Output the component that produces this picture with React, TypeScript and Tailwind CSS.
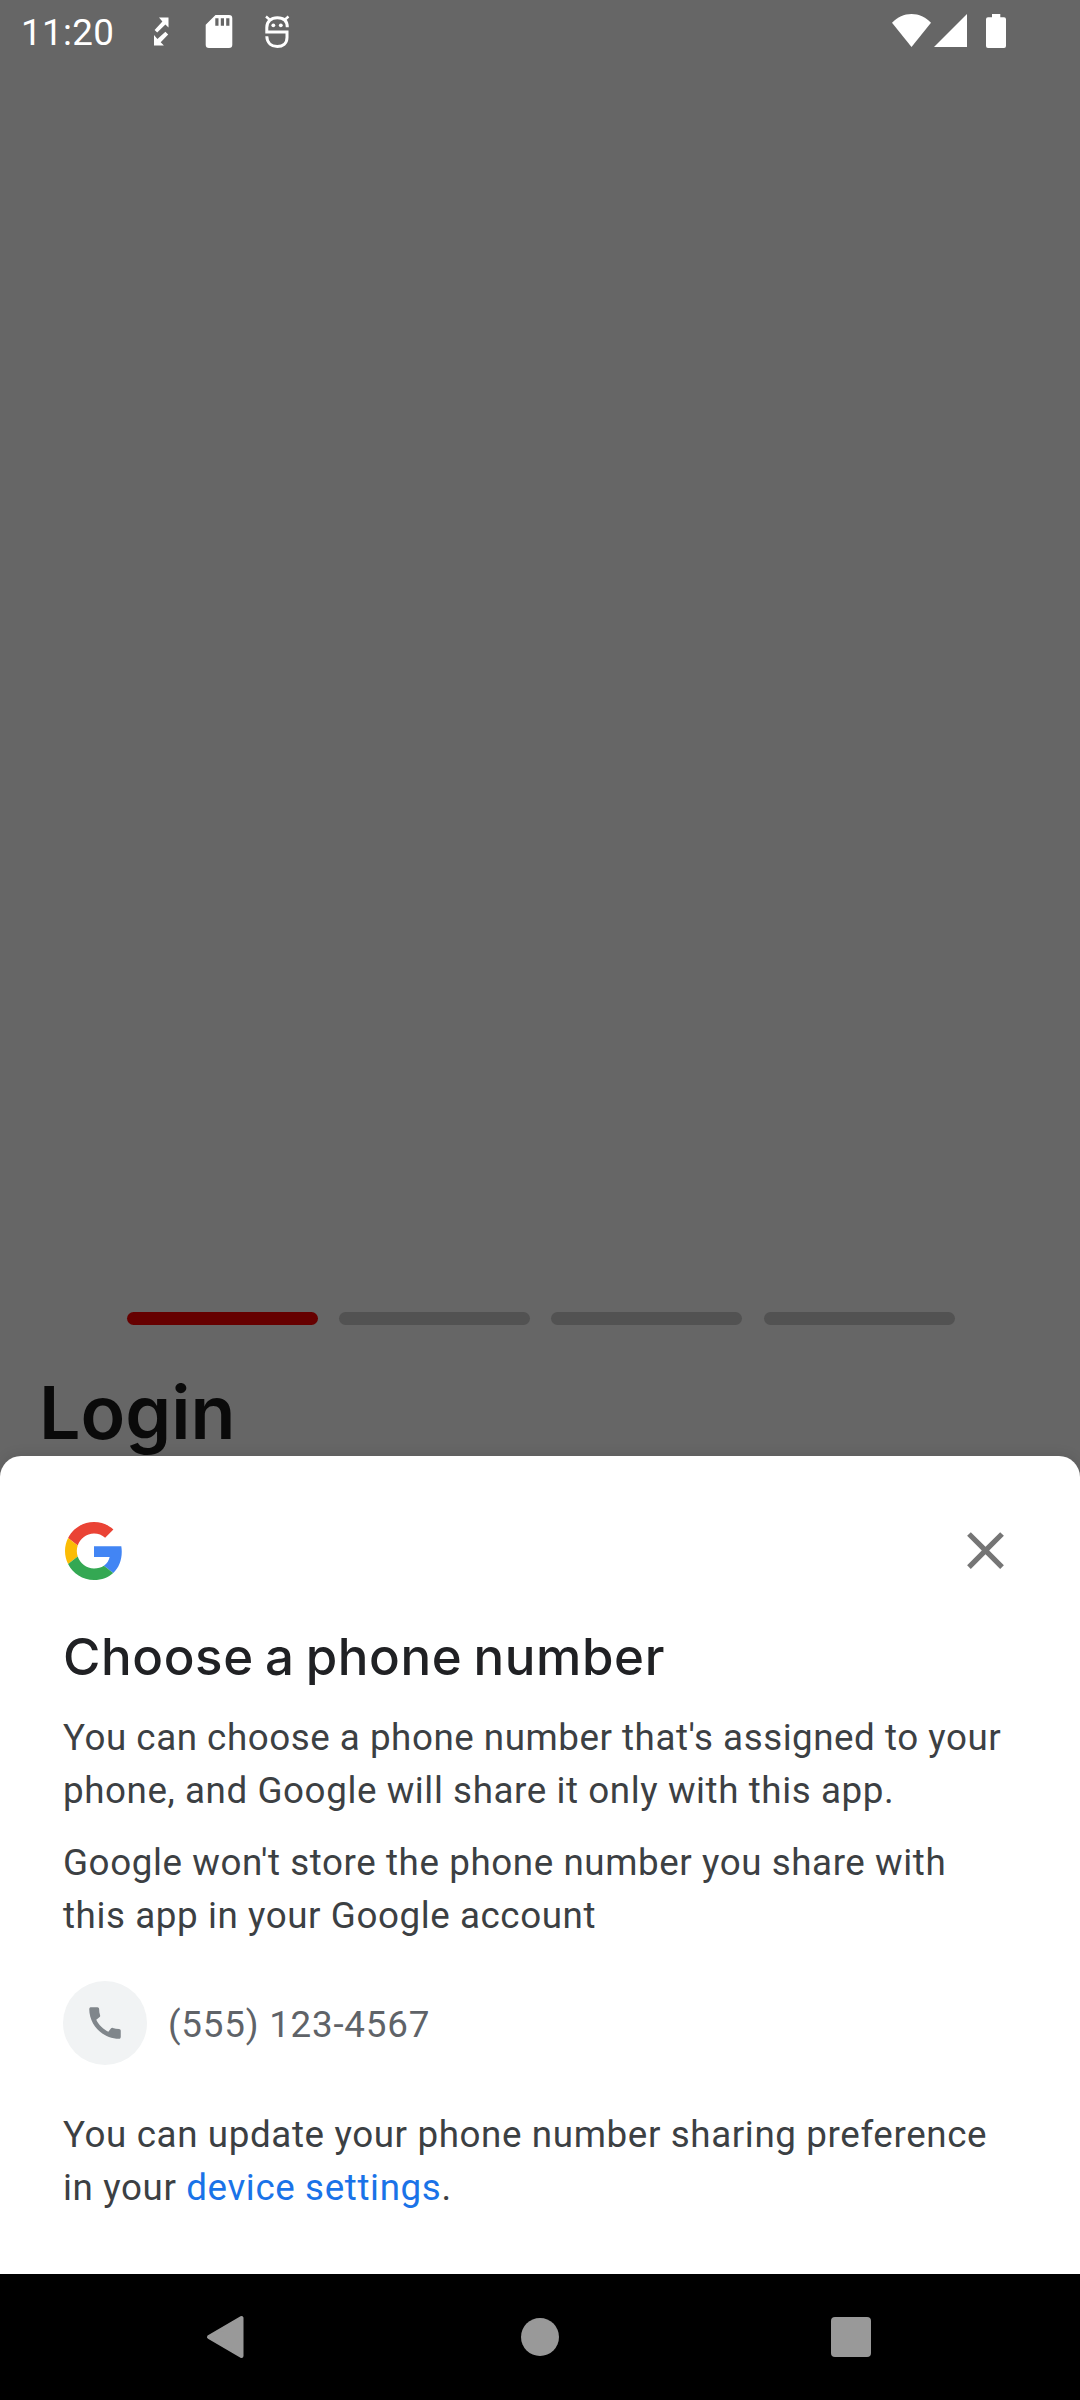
import React from "react";

function StatusBar() {
  return (
    <header className="flex h-[63px] shrink-0 items-start text-white">
      <span className="ml-[21px] mt-[11px] w-[133px] whitespace-nowrap text-[36.75px] leading-[43px] tracking-[0.35px]">11:20</span>
      <svg className="mt-[17px] h-[29px] w-[15px]" viewBox="0 0 15 29" fill="currentColor">
        <path d="M5 0.500H14.500V10.500l-3.100-3.100L3.200 15.600.6 13 8.400 4.500z" />
        <path d="M0 18v10.500h9.900L6.700 25.200 14.200 17.600 11.400 14.800 3.400 22z" />
      </svg>
      <svg className="ml-[36px] mt-[15px] h-[33px] w-[28px]" viewBox="0 0 28 33" fill="currentColor">
        <path fillRule="evenodd" d="M10.500 0H24a3.300 3.300 0 0 1 3.300 3.300V29.700A3.300 3.300 0 0 1 24 33H4A3.300 3.300 0 0 1 .7 29.700V9.800zM10.300 3.200v7.500h3.200V3.200zM15.800 3.200v7.500H19V3.200zM21.200 3.200v7.500h3.200V3.200z" />
      </svg>
      <svg className="ml-[32px] mt-[15px] h-[34px] w-[25px]" viewBox="0 0 25 34" fill="none" stroke="currentColor">
        <path strokeWidth="3" d="M22.300 12.300C22.300 5.900 18.600 2.700 12.300 2.700S1.800 6.600 1.800 12.500V17H22v5.500c0 6-4.300 9-9.700 9S2 28.400 1.800 21.300" />
        <path strokeWidth="2.400" d="M1 1.500 5 5M23.500 1.500 19.500 5" />
        <circle cx="8.300" cy="10.300" r="1.900" fill="currentColor" stroke="none" />
        <circle cx="15.800" cy="10.300" r="1.900" fill="currentColor" stroke="none" />
      </svg>
      <div className="ml-auto mr-[74px] mt-[14px] flex items-start">
        <svg className="h-[33px] w-[39px]" viewBox="0 0 39 33" fill="currentColor">
          <path d="M0 8.800C5.500 3 12 0 19.500 0S33.500 3 39 8.800L19.500 33z" />
        </svg>
        <svg className="ml-[3px] h-[33px] w-[33px]" viewBox="0 0 33 33" fill="currentColor">
          <path d="M33 0v33H0z" />
        </svg>
        <svg className="ml-[19px] h-[34px] w-[20px]" viewBox="0 0 20 34" fill="currentColor">
          <path d="M6 0h8.300v3.300h3.700a2 2 0 0 1 2 2V32a2 2 0 0 1-2 2H2a2 2 0 0 1-2-2V5.300a2 2 0 0 1 2-2h4z" />
        </svg>
      </div>
    </header>
  );
}

function GoogleLogo() {
  return (
    <svg className="h-[58px] w-[58px]" viewBox="0 0 48 48">
      <path fill="#EA4335" d="M24 9.500c3.540 0 6.710 1.220 9.210 3.600l6.850-6.850C35.900 2.380 30.470 0 24 0 14.620 0 6.510 5.380 2.560 13.220l7.980 6.190C12.430 13.720 17.740 9.500 24 9.500z" />
      <path fill="#4285F4" d="M46.980 24.550c0-1.570-.15-3.090-.38-4.550H24v9.020h12.940c-.58 2.960-2.260 5.480-4.780 7.180l7.730 6c4.510-4.180 7.090-10.360 7.090-17.650z" />
      <path fill="#FBBC05" d="M10.530 28.590c-.48-1.450-.76-2.990-.76-4.590s.27-3.140.76-4.590l-7.980-6.190C.92 16.460 0 20.120 0 24c0 3.880.92 7.540 2.560 10.780l7.970-6.190z" />
      <path fill="#34A853" d="M24 48c6.480 0 11.930-2.130 15.890-5.810l-7.730-6c-2.150 1.450-4.920 2.300-8.160 2.300-6.260 0-11.570-4.220-13.470-9.910l-7.980 6.190C6.510 42.620 14.620 48 24 48z" />
    </svg>
  );
}

function PhoneSheet() {
  return (
    <section className="flex h-[818px] shrink-0 flex-col rounded-t-[21px] bg-white px-[63px] text-[36.75px] leading-[53px] tracking-[0.58px] text-[#3c4043] shadow-[0_0_14px_rgba(0,0,0,0.12)]">
      <div className="mt-[63px] flex h-[63px] items-center justify-between">
        <div className="pl-[2px]">
          <GoogleLogo />
        </div>
        <button aria-label="Close">
          <svg className="h-[63px] w-[63px]" viewBox="0 0 24 24" fill="#757575">
            <path d="M19 6.410 17.590 5 12 10.590 6.410 5 5 6.410 10.590 12 5 17.590 6.410 19 12 13.410 17.590 19 19 17.590 13.410 12z" />
          </svg>
        </button>
      </div>
      <h2 className="mt-[43px] h-[64px] whitespace-nowrap font-['Inter'] text-[51px] font-medium leading-[64px] tracking-[0.6px] [word-spacing:-3px] text-[#202124]">
        Choose a phone number
      </h2>
      <p className="mt-[22px] whitespace-nowrap">
        <span className="tracking-[0.53px]">You can choose a phone number that's assigned to your</span>
        <br />
        phone, and Google will share it only with this app.
      </p>
      <p className="mt-[19px] whitespace-nowrap">
        Google won't store the phone number you share with
        <br />
        this app in your Google account
      </p>
      <div className="mt-[39px] flex h-[84px] items-center">
        <span className="flex size-[84px] items-center justify-center rounded-full bg-[#f1f3f4]">
          <svg className="size-[42px]" viewBox="0 0 24 24" fill="#80868b">
            <path d="M20.010 15.380c-1.230 0-2.420-.2-3.530-.56-.35-.12-.74-.03-1.010.24l-1.570 1.970c-2.830-1.350-5.480-3.900-6.890-6.830l1.950-1.660c.27-.28.35-.67.24-1.020-.37-1.110-.56-2.300-.56-3.530 0-.54-.45-.99-.99-.99H4.190C3.650 3 3 3.240 3 3.990 3 13.280 10.730 21 20.010 21c.71 0 .99-.63.99-1.180v-3.450c0-.54-.45-.99-.99-.99z" />
          </svg>
        </span>
        <span className="ml-[21px] mt-[2px] tracking-[0.78px] text-[#5f6368]">(555) 123-4567</span>
      </div>
      <p className="mt-[43px] whitespace-nowrap tracking-[0.62px]">
        You can update your phone number sharing preference
        <br />
        in your <a className="text-[#1a73e8]">device settings</a>.
      </p>
    </section>
  );
}

function NavigationBar() {
  return (
    <nav className="flex h-[126px] shrink-0 items-center bg-black pl-[206px] text-[#999999]">
      <svg className="h-[44px] w-[38px]" viewBox="0 0 38 44" fill="currentColor" stroke="currentColor" strokeWidth="4" strokeLinejoin="round">
        <path d="M3 22 35.500 3V41z" />
      </svg>
      <span className="ml-[277px] size-[38px] rounded-full bg-[#999999]" />
      <span className="ml-[272px] size-[40px] rounded-[4px] bg-[#999999]" />
    </nav>
  );
}

export default function App() {
  return (
    <main className="flex h-[2400px] w-[1080px] flex-col overflow-hidden bg-[#666666] font-['Roboto',sans-serif]">
      <StatusBar />
      <div className="mt-[1249px] flex h-[13px] shrink-0 gap-[21.200px] pl-[127px]">
        <span className="w-[191px] rounded-full bg-[#660000]" />
        <span className="w-[191px] rounded-full bg-[#525252]" />
        <span className="w-[191px] rounded-full bg-[#525252]" />
        <span className="w-[191px] rounded-full bg-[#525252]" />
      </div>
      <div className="h-[131px] shrink-0 pl-[39px] pt-[44px]">
        <h1 className="font-['Inter'] text-[73.5px] font-semibold leading-[88px] text-[#0a0a0a]">Login</h1>
      </div>
      <PhoneSheet />
      <NavigationBar />
    </main>
  );
}
